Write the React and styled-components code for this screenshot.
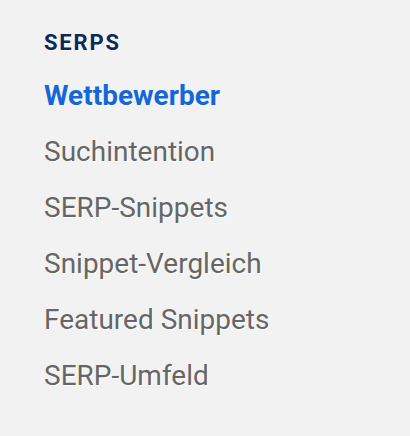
import React from 'react';
import styled, { createGlobalStyle } from 'styled-components';

const GlobalStyle = createGlobalStyle`
  html, body {
    margin: 0;
    padding: 0;
    background: #f2f2f2;
  }
  body {
    font-family: Roboto, "Liberation Sans", sans-serif;
  }
`;

const Nav = styled.nav`
  width: 410px;
  height: 436px;
  box-sizing: border-box;
  padding: 29px 0 0 44px;
  background: #f2f2f2;
`;

const Heading = styled.h3`
  margin: 0 0 11px;
  font-size: 22px;
  font-weight: 700;
  letter-spacing: 1.8px;
  line-height: 28px;
  color: #0b2a5b;
  text-shadow: 1px 1px 0 #fff;
`;

const List = styled.ul`
  list-style: none;
  margin: 0;
  padding: 0;
  display: flex;
  flex-direction: column;
`;

const Item = styled.li`
  font-size: 28px;
  line-height: 56px;
  font-weight: ${p => (p.$active ? 700 : 400)};
  color: ${p => (p.$active ? '#1467d8' : '#666666')};
  text-shadow: 1px 1px 0 #fff;
  white-space: nowrap;
`;

const items = [
  'Wettbewerber',
  'Suchintention',
  'SERP-Snippets',
  'Snippet-Vergleich',
  'Featured Snippets',
  'SERP-Umfeld',
];

const App = () => {
  return (
    <>
      <GlobalStyle />
      <Nav>
        <Heading>SERPS</Heading>
        <List>
          {items.map((label, i) => (
            <Item key={label} $active={i === 0}>
              {label}
            </Item>
          ))}
        </List>
      </Nav>
    </>
  );
};

export default App;
